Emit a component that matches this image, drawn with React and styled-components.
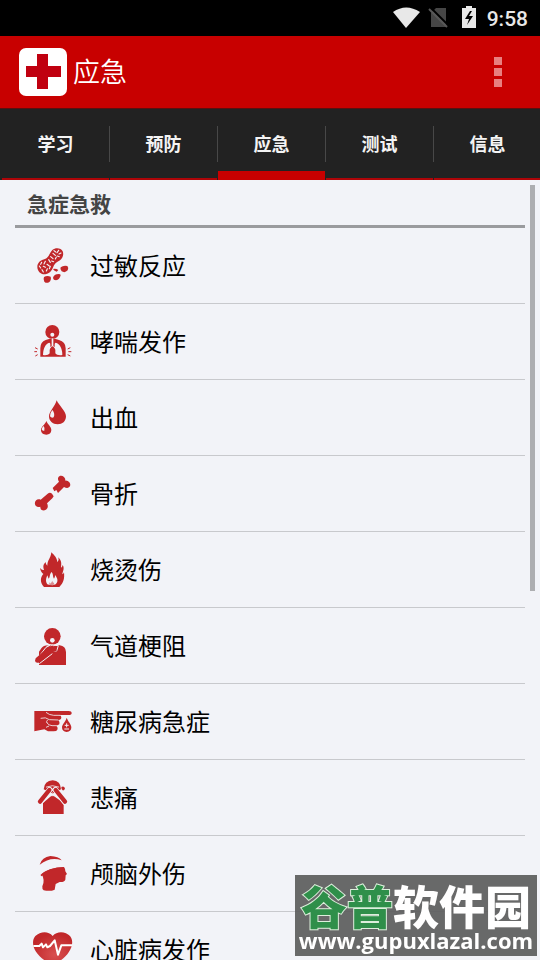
import React, { useState } from "react";
import styled, { createGlobalStyle } from "styled-components";

const RED = "#c80000";
const ICON_RED = "#c1272a";
const PAGE = "#f2f3f8";

const GlobalStyle = createGlobalStyle`
  * { box-sizing: border-box; }
  body {
    margin: 0;
    background: ${PAGE};
    font-family: Roboto, "Noto Sans CJK SC", sans-serif;
  }
  button { font: inherit; border: 0; background: none; padding: 0; cursor: pointer; }
`;

const Screen = styled.div`
  display: flex;
  flex-direction: column;
  height: 100vh;
  overflow: hidden;
  background: ${PAGE};
`;

const StatusBar = styled.div`
  flex: none;
  display: flex;
  align-items: center;
  justify-content: flex-end;
  gap: 2px;
  height: 36px;
  padding-right: 12px;
  background: #000;
`;

const StatusIcons = styled.svg`
  width: 92px;
  height: 36px;
`;

const Clock = styled.time`
  padding-top: 2px;
  color: #e8e8e8;
  font-size: 21px;
  font-weight: 500;
  line-height: 36px;
`;

const Header = styled.header`
  flex: none;
  display: flex;
  align-items: center;
  gap: 6px;
  height: 72px;
  padding: 0 18px 0 19px;
  background: ${RED};
`;

const Logo = styled.svg`
  width: 48px;
  height: 48px;
`;

const Title = styled.h1`
  flex: 1;
  margin: 0;
  padding-bottom: 2px;
  color: #fff;
  font-family: "Noto Sans CJK SC", sans-serif;
  font-size: 27px;
  font-weight: 350;
  line-height: 36px;
`;

const MenuButton = styled.button`
  display: flex;
  flex-direction: column;
  align-items: center;
  justify-content: center;
  gap: 3px;
  width: 48px;
  height: 48px;
`;

const MenuDot = styled.span`
  width: 8px;
  height: 8px;
  background: #e88080;
`;

const TabBar = styled.nav`
  flex: none;
  overflow: hidden;
  background: #222;
  box-shadow: inset 0 1px 0 #5a1010;
`;

const TabList = styled.div`
  display: flex;
  height: 72px;
  margin: 0 -1px 0 1px;
`;

const Tab = styled.button`
  position: relative;
  flex: 1;
  margin-left: 1px;
  padding-bottom: 2px;
  color: #f4f4f4;
  font-size: 18px;
  font-weight: 700;
  box-shadow: inset 0 ${(p) => (p.$active ? "-9px" : "-2px")} 0 ${(p) => (p.$active ? RED : "#ae0508")};

  &:not(:first-child)::before {
    content: "";
    position: absolute;
    left: -1px;
    top: 18px;
    width: 1px;
    height: 36px;
    background: #484848;
  }
`;

const Content = styled.main`
  position: relative;
  flex: 1;
  min-height: 0;
`;

const Scroller = styled.div`
  height: 100%;
  padding: 0 15px;
  overflow-y: auto;
  scrollbar-width: none;
`;

const ScrollThumb = styled.div`
  position: absolute;
  top: 5px;
  right: 5px;
  width: 5px;
  height: 52%;
  background: #adaeb1;
`;

const SectionTitle = styled.h2`
  height: 48px;
  margin: 0;
  padding: 2px 0 0 12px;
  border-bottom: 3px solid #9a9b9e;
  color: #444;
  font-size: 21px;
  font-weight: 700;
  line-height: 46px;
`;

const TopicList = styled.ul`
  margin: 0;
  padding: 0;
  list-style: none;
`;

const TopicItem = styled.li`
  border-bottom: 1px solid #c8c9cd;
`;

const TopicButton = styled.button`
  display: flex;
  align-items: center;
  gap: 18px;
  width: 100%;
  height: 75px;
  padding-left: 18px;
  color: #000;
  font-size: 24px;
  text-align: left;
`;

const TopicLabel = styled.span`
  padding-bottom: 2px;
`;

const TopicIcon = styled.svg`
  flex: none;
  width: 39px;
  height: 39px;
  fill: ${ICON_RED};
  overflow: visible;
`;

const Watermark = styled.aside`
  position: fixed;
  right: 3px;
  bottom: 4px;
  display: flex;
  flex-direction: column;
  align-items: center;
  width: 242px;
  height: 81px;
  background: rgba(94, 94, 94, 0.93);
  color: #fff;
  white-space: nowrap;
  pointer-events: none;
`;

const SiteName = styled.div`
  height: 50px;
  font-family: "Noto Sans CJK SC", sans-serif;
  font-size: 46px;
  font-weight: 900;
  line-height: 58px;
`;

const SiteAccent = styled.span`
  color: #2f8f4a;
  -webkit-text-stroke: 2px #dcefdc;
  paint-order: stroke fill;
`;

const SiteAddress = styled.div`
  font-family: "Open Sans", sans-serif;
  font-size: 22px;
  font-weight: 700;
  line-height: 30px;
`;

const Peanut = () => (
  <TopicIcon viewBox="39 33 117 117" aria-hidden="true">
    <path d="M97 45C107 36 124 39 128 49C132 59 128 70 120 76C113 81 107 82 102 91C97 104 92 114 79 117C65 121 52 110 52 96C52 82 63 75 75 72C86 69 88 54 97 45Z" />
    <g fill="none" stroke={PAGE} strokeWidth="3.4" strokeLinecap="round">
      <path d="M102 47l5 4M116 46l-5 7M123 54l-6 3M99 55l7 6M112 63l6 2M92 65l7 6M106 72l3-6M86 74l5 8M101 80l-6-2M76 79l-4 8M65 82l-3 6M81 88l7 5M70 94l6 3M58 93l4 6M66 104l4 7M82 101l-3 7M91 94l-3 7" />
    </g>
    <path d="M122 97q8-7 20-4q5 5 1 13q-8 9-18 3q-6-7-3-12Z" />
    <path d="M99 102q8-3 16 3l-5 5q-9-3-11-8Z" />
    <path d="M99 129q1-8 11-11q10-3 12 2q-3 15-14 16q-8 0-9-7Z" />
    <path d="M72 126q9-5 20-1q3 10-5 17q-8 4-14-2q-4-7-1-14Z" />
  </TopicIcon>
);

const Lungs = () => (
  <TopicIcon viewBox="39 36 117 117" aria-hidden="true">
    <circle cx="97" cy="66" r="21" />
    <path d="M61 140V115Q61 95 77 90Q97 82 117 90Q137 95 137 115V140Z" />
    <g fill={PAGE}>
      <circle cx="97" cy="74" r="6" />
      <path d="M95 85h5v27h-5Z" />
      <path d="M91 103Q91 98 88 98C76 101 69 117 69 135Q82 138 91 129Z" />
      <path d="M104 103Q104 98 107 98C120 101 127 117 127 135Q113 138 104 129Z" />
    </g>
    <path d="M97 108l-8 11v18h17v-18Z" />
    <path d="M94 109l-7 8M101 109l7 8" stroke={PAGE} strokeWidth="3" />
    <path d="M53 117l-8-4M51 125h-8M53 134l-7 4M143 117l8-4M145 125h9M143 134l8 4" fill="none" stroke={ICON_RED} strokeWidth="3" />
  </TopicIcon>
);

const Drops = () => (
  <TopicIcon viewBox="39 24 117 117" aria-hidden="true">
    <path d="M110 31C116 46 138 63 138 79C138 94 127 103 113 103C98 103 87 93 87 79C87 65 104 51 110 31Z" />
    <path d="M79 93C82 102 94 110 94 120C94 129 88 134 79 134C70 134 63 129 63 120C63 110 76 103 79 93Z" />
    <path d="M97 60Q106 71 101 82Q95 86 90 79Q89 70 97 60ZM71 108Q76 116 73 122Q68 124 65 118Q66 112 71 108Z" fill={PAGE} />
  </TopicIcon>
);

const Bone = () => (
  <TopicIcon viewBox="39 252 117 117" aria-hidden="true">
    <path d="M98 294L117 275C108 262 121 252 132 261Q137 266 136 272Q143 271 148 277C156 288 146 299 132 291L114 309L109 300L103 304Z" />
    <path d="M96 311L101 319L97 325L81 340C88 353 79 363 67 361Q60 358 61 350Q53 353 47 347C40 337 49 324 62 329L83 311Q90 306 96 311Z" />
  </TopicIcon>
);

const Flame = () => (
  <TopicIcon viewBox="39 30 117 117" aria-hidden="true">
    <path d="M72 141C59 127 61 111 70 102C64 99 61 89 60 84Q67 92 72 89C67 76 73 71 77 66Q77 74 82 77C82 60 92 56 94 37C104 47 111 53 112 67Q118 60 115 52C126 64 124 72 123 83Q127 82 128 75C135 86 127 96 127 103Q131 102 132 97C134 116 131 128 118 141Z" />
    <path d="M82 133C75 123 79 113 82 106L86 116C91 111 88 102 95 96C101 103 97 110 102 116Q106 110 105 105C114 116 115 125 107 133L98 136L89 135Z" fill={PAGE} />
    <path d="M89 136Q86 131 89 127L92 131L97 122Q98 130 102 128Q104 133 99 136Z" opacity="0.5" />
  </TopicIcon>
);

const Choking = () => (
  <TopicIcon viewBox="39 258 117 117" aria-hidden="true">
    <circle cx="97" cy="289" r="25" />
    <path d="M57 375V335L64 325Q70 316 84 316H119Q137 318 138 336V375Z" />
    <path d="M47 362L91 333H110L115 317L92 315L78 322L61 344Z" stroke={PAGE} strokeWidth="3" />
    <path d="M47 355L79 327L106 320L110 332L93 338L56 368Q46 370 45 362Z" />
    <path d="M58 371L97 341" stroke={PAGE} strokeWidth="3" />
    <circle cx="97" cy="301" r="7" fill={PAGE} />
    <path d="M80 319l9-4M92 318l6-5M101 318l5-4" stroke={PAGE} strokeWidth="2" />
  </TopicIcon>
);

const FingerPrick = () => (
  <TopicIcon viewBox="39 21 117 117" aria-hidden="true">
    <path d="M43 48H146Q155 48 155 54Q155 60 146 60H117Q124 61 124 67Q124 75 115 75Q121 82 118 88Q115 91 108 92Q115 96 112 104Q110 109 101 109H84L73 103L43 109Z" />
    <path d="M78 52Q87 60 101 61L121 61M62 70Q77 65 88 74L115 75M79 82Q87 92 96 92H110M83 75Q77 79 82 83M78 97L87 93" fill="none" stroke={PAGE} strokeWidth="2.5" />
    <path d="M140 68C144 79 154 88 154 97Q154 110 140 111Q126 110 126 97C126 88 137 80 140 68Z" />
    <path d="M134 91h12M140 85v12M133 102h14" fill="none" stroke={PAGE} strokeWidth="3" />
  </TopicIcon>
);

const Grief = () => (
  <TopicIcon viewBox="39 249 117 117" aria-hidden="true">
    <path d="M71 283Q73 257 98 256Q122 257 123 283L98 296Z" />
    <path d="M69 357V324L97 300L131 324V357Z" />
    <g strokeLinecap="round" fill="none">
      <path d="M60 322L89 284M135 322L106 284" stroke={PAGE} strokeWidth="17" />
      <path d="M60 320L88 285M135 320L107 285" stroke={ICON_RED} strokeWidth="13" />
      <path d="M79 276Q97 268 116 276" stroke={PAGE} strokeWidth="2.5" />
      <path d="M91 301L97 293L104 301Z" stroke={PAGE} strokeWidth="3" />
    </g>
    <path d="M124 276Q132 272 135 280Q134 287 128 286Q124 284 124 276Z" />
  </TopicIcon>
);

const HeadInjury = () => (
  <TopicIcon viewBox="39 27 117 117" aria-hidden="true">
    <path d="M59 59Q66 36 91 33Q116 34 125 46Q92 33 59 59Z" />
    <path d="M65 87Q89 67 132 66Q137 73 136 79L141 87L137 91L136 104Q133 112 119 111L107 117L104 134Q91 140 71 136Q66 133 67 124Q76 107 65 87Z" />
    <path d="M63 92Q85 69 132 69" fill="none" stroke={ICON_RED} strokeWidth="5" />
  </TopicIcon>
);

const Heart = () => (
  <TopicIcon viewBox="39 255 117 117" aria-hidden="true">
    <defs>
      <radialGradient id="heartShade" cx="55%" cy="65%" r="60%">
        <stop offset="0" stopColor="#d85050" />
        <stop offset="1" stopColor="#c1272a" />
      </radialGradient>
    </defs>
    <path fill="url(#heartShade)" d="M98 273C111 257 137 259 150 273C161 287 157 305 147 320C135 340 115 350 98 365C80 350 60 338 48 320C37 303 36 285 46 273C61 259 85 257 98 273Z" />
    <path d="M40 303H58L65 296L69 307L78 298L82 307L90 303L104 286L114 329L124 301H156" fill="none" stroke="#fff" strokeWidth="6" strokeLinejoin="round" />
  </TopicIcon>
);

const TABS = ["学习", "预防", "应急", "测试", "信息"];

const TOPICS = [
  { label: "过敏反应", Icon: Peanut },
  { label: "哮喘发作", Icon: Lungs },
  { label: "出血", Icon: Drops },
  { label: "骨折", Icon: Bone },
  { label: "烧烫伤", Icon: Flame },
  { label: "气道梗阻", Icon: Choking },
  { label: "糖尿病急症", Icon: FingerPrick },
  { label: "悲痛", Icon: Grief },
  { label: "颅脑外伤", Icon: HeadInjury },
  { label: "心脏病发作", Icon: Heart },
];

export default function App() {
  const [active, setActive] = useState("应急");
  return (
    <Screen>
      <GlobalStyle />
      <StatusBar>
        <StatusIcons viewBox="392 0 92 36" aria-hidden="true">
          <path d="M392 12Q405 3 419 12L405 28Z" fill="#e8e8e8" />
          <path d="M435 8H445V27H430V13Z" fill="#464646" />
          <path d="M430 8L448 26" stroke="#000" strokeWidth="2" />
          <path d="M428 9L446 27" stroke="#585858" strokeWidth="2" />
          <path d="M461 8H465V6H471V8H475V28H461Z" fill="#e8e8e8" />
          <path d="M469 11L464 19H468L466 25L472 16H468L471 11Z" fill="#000" />
        </StatusIcons>
        <Clock>9:58</Clock>
      </StatusBar>
      <Header>
        <Logo viewBox="0 0 48 48" aria-hidden="true">
          <rect width="48" height="48" rx="7" fill="#fff" />
          <path d="M18 6H29V18H42V29H29V41H18V29H7V18H18Z" fill="#c00010" />
        </Logo>
        <Title>应急</Title>
        <MenuButton aria-label="菜单">
          <MenuDot />
          <MenuDot />
          <MenuDot />
        </MenuButton>
      </Header>
      <TabBar>
        <TabList role="tablist">
          {TABS.map((tab) => (
            <Tab
              key={tab}
              role="tab"
              aria-selected={tab === active}
              $active={tab === active}
              onClick={() => setActive(tab)}
            >
              {tab}
            </Tab>
          ))}
        </TabList>
      </TabBar>
      <Content>
        <Scroller>
          <SectionTitle>急症急救</SectionTitle>
          <TopicList>
            {TOPICS.map(({ label, Icon }) => (
              <TopicItem key={label}>
                <TopicButton>
                  <Icon />
                  <TopicLabel>{label}</TopicLabel>
                </TopicButton>
              </TopicItem>
            ))}
          </TopicList>
        </Scroller>
        <ScrollThumb />
      </Content>
      <Watermark>
        <SiteName>
          <SiteAccent>谷普</SiteAccent>软件园
        </SiteName>
        <SiteAddress>www.gupuxlazal.com</SiteAddress>
      </Watermark>
    </Screen>
  );
}
